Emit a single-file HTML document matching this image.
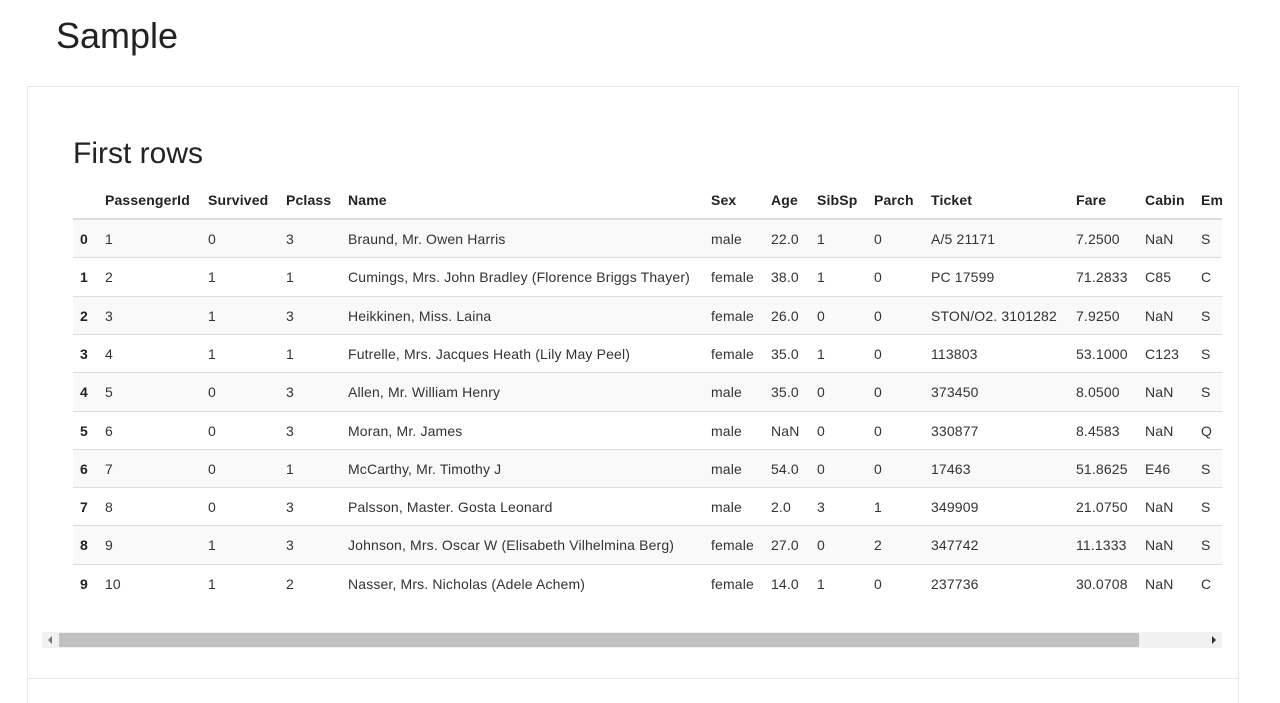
<!DOCTYPE html>
<html><head><meta charset="utf-8"><style>
html,body{margin:0;width:1280px;height:703px;overflow:hidden}
body{background:#fff;font-family:"Liberation Sans",Arial,sans-serif;color:#333;position:relative}
h1{position:absolute;left:56px;top:15px;margin:0;font-weight:400;font-size:36px;color:#222}
.box{position:absolute;left:27px;top:86px;width:1210px;height:630px;border:1px solid #e7e7e7}
.hr{position:absolute;left:28px;top:678px;width:1210px;height:1px;background:#e7e7e7}
h2{position:absolute;left:73px;top:137px;margin:0;font-weight:400;font-size:30px;color:#222}
.tbl{position:absolute;left:73px;top:180px;width:1149px;height:422px;overflow:hidden;font-size:14px;letter-spacing:0.15px}
.row{position:absolute;left:0;width:1300px;height:38px;border-top:1px solid #ddd}
.row.s{background:#f9f9f9}
.row span{position:absolute;top:11px;white-space:nowrap}
.hd{position:absolute;top:0;left:0;width:1300px;height:38px;border-bottom:2px solid #ddd;font-weight:bold;color:#222}
.hd span{position:absolute;top:12px;white-space:nowrap}
.row span:first-child{font-weight:bold;color:#222}
.sb{position:absolute;left:42px;top:632px;width:1180px;height:16px;background:#f1f1f1}
.th{position:absolute;left:17px;top:1px;width:1080px;height:14px;background:#c1c1c1}
</style></head><body>
<h1>Sample</h1>
<div class="box"></div>
<div class="hr"></div>
<h2>First rows</h2>
<div class="tbl">
<div class="hd"><span style="left:32px">PassengerId</span><span style="left:135px">Survived</span><span style="left:213px">Pclass</span><span style="left:275px">Name</span><span style="left:638px">Sex</span><span style="left:698px">Age</span><span style="left:744px">SibSp</span><span style="left:801px">Parch</span><span style="left:858px">Ticket</span><span style="left:1003px">Fare</span><span style="left:1072px">Cabin</span><span style="left:1128px">Embarked</span></div>
</div>
<div class="sb"><div class="th"></div><div style="position:absolute;left:6px;top:4px;border:4px solid transparent;border-right:4px solid #777;border-left:0"></div><div style="position:absolute;right:6px;top:4px;border:4px solid transparent;border-left:4px solid #333;border-right:0"></div></div>
<script>
var d=[["0","1","0","3","Braund, Mr. Owen Harris","male","22.0","1","0","A/5 21171","7.2500","NaN","S"],
["1","2","1","1","Cumings, Mrs. John Bradley (Florence Briggs Thayer)","female","38.0","1","0","PC 17599","71.2833","C85","C"],
["2","3","1","3","Heikkinen, Miss. Laina","female","26.0","0","0","STON/O2. 3101282","7.9250","NaN","S"],
["3","4","1","1","Futrelle, Mrs. Jacques Heath (Lily May Peel)","female","35.0","1","0","113803","53.1000","C123","S"],
["4","5","0","3","Allen, Mr. William Henry","male","35.0","0","0","373450","8.0500","NaN","S"],
["5","6","0","3","Moran, Mr. James","male","NaN","0","0","330877","8.4583","NaN","Q"],
["6","7","0","1","McCarthy, Mr. Timothy J","male","54.0","0","0","17463","51.8625","E46","S"],
["7","8","0","3","Palsson, Master. Gosta Leonard","male","2.0","3","1","349909","21.0750","NaN","S"],
["8","9","1","3","Johnson, Mrs. Oscar W (Elisabeth Vilhelmina Berg)","female","27.0","0","2","347742","11.1333","NaN","S"],
["9","10","1","2","Nasser, Mrs. Nicholas (Adele Achem)","female","14.0","1","0","237736","30.0708","NaN","C"]];
var x=[7,32,135,213,275,638,698,744,801,858,1003,1072,1128];
var t=document.querySelector('.tbl'),h='';
d.forEach(function(r,i){h+='<div class="row'+(i%2==0?' s':'')+'" style="top:'+(39+i*38.3)+'px">';r.forEach(function(c,j){h+='<span style="left:'+x[j]+'px">'+c+'</span>'});h+='</div>'});
t.insertAdjacentHTML('beforeend',h);
</script>
</body></html>
